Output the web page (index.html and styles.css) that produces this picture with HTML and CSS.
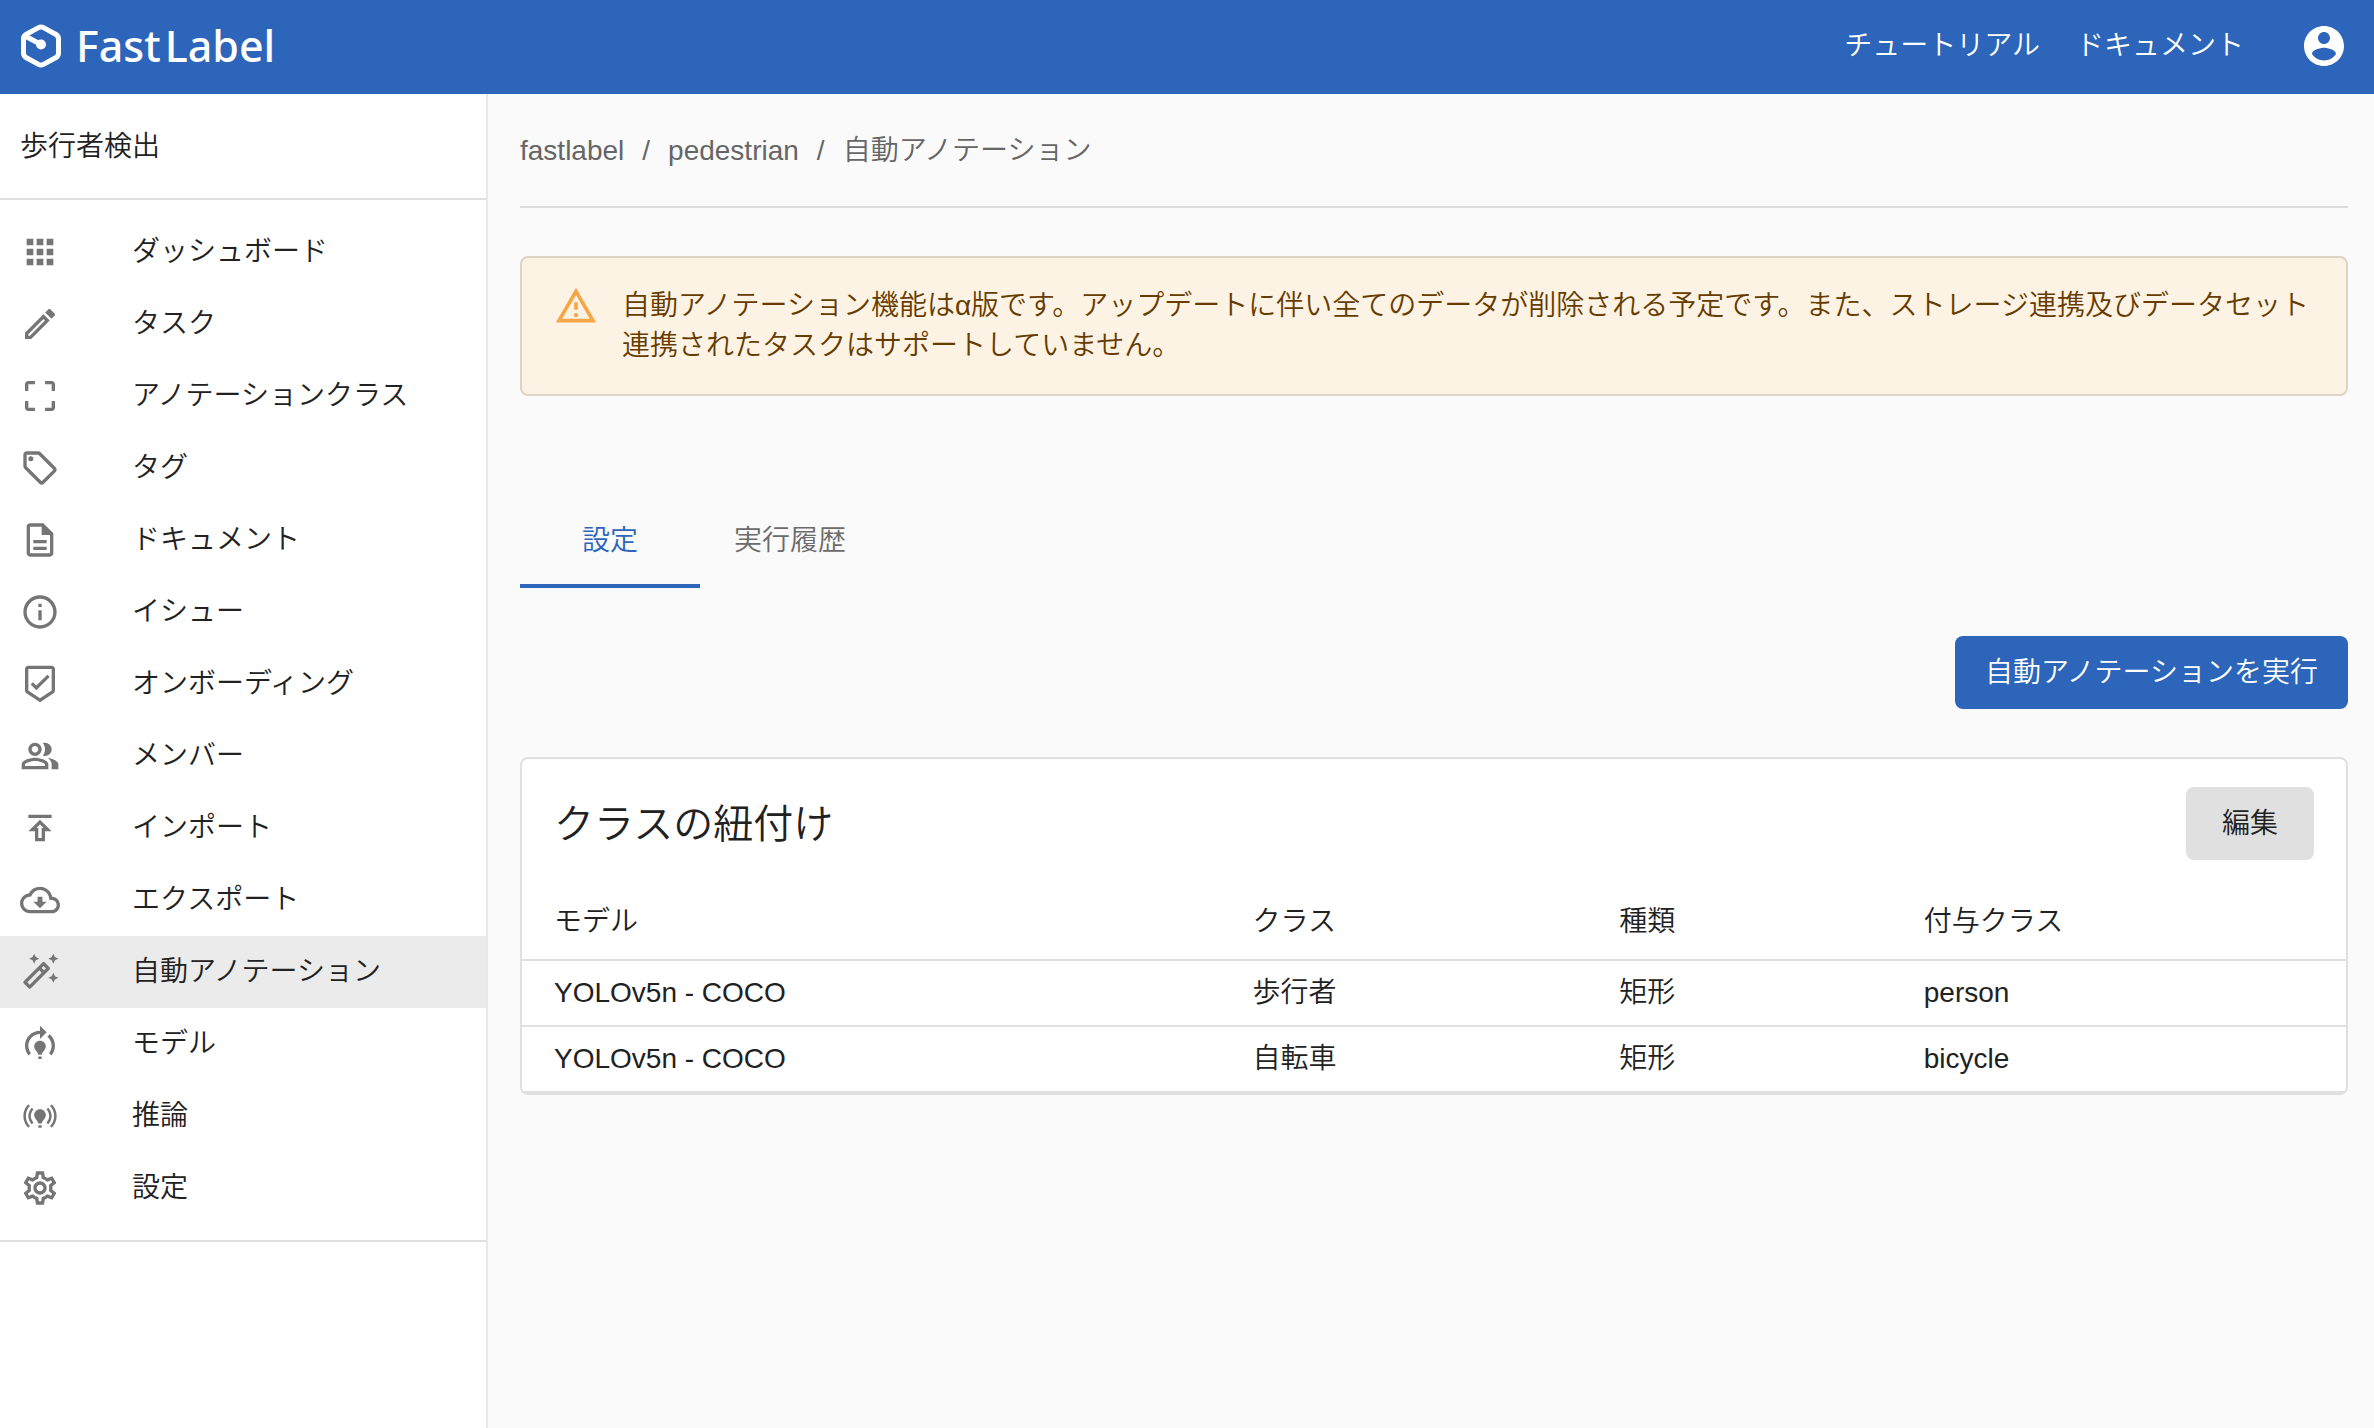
FILE: index.html
```html
<!DOCTYPE html>
<html lang="ja">

<head>
    <meta charset="UTF-8">
    <meta name="viewport" content="width=device-width, initial-scale=1.0">
    <title>自動アノテーション | FastLabel</title>
    <link rel="stylesheet" href="styles.css">
</head>

<body>
    <header class="header">
        <a class="logo" href="#">
            <svg class="logo_mark" viewBox="0 0 42 44">
                <path d="M18.5 3.6Q21 2.3 23.5 3.6L36 10.5Q38.5 12 38.5 15V29Q38.5 32 36 33.5L23.5 40.4Q21 41.7 18.5 40.4L6 33.5Q3.5 32 3.5 29V15Q3.5 12 6 10.5Z" fill="none" stroke="#fff" stroke-width="5" />
                <path d="M5 12L21 20.5" stroke="#fff" stroke-width="5" />
                <circle cx="21" cy="20.5" r="5" fill="#fff" />
            </svg>
            <span class="logo_text"><span>Fast</span><span>Label</span></span>
        </a>
        <nav class="header_nav">
            <a href="#">チュートリアル</a>
            <a href="#">ドキュメント</a>
        </nav>
        <button class="account" type="button" aria-label="アカウント">
            <svg viewBox="0 0 24 24"><path d="M12 2C6.48 2 2 6.48 2 12s4.48 10 10 10 10-4.48 10-10S17.52 2 12 2zm0 3c1.66 0 3 1.34 3 3s-1.34 3-3 3-3-1.34-3-3 1.34-3 3-3zm0 14.2c-2.5 0-4.71-1.28-6-3.22.03-1.99 4-3.08 6-3.08 1.99 0 5.97 1.09 6 3.08-1.29 1.94-3.5 3.22-6 3.22z" /></svg>
        </button>
    </header>

    <div class="wrap">
        <aside class="sidebar">
            <div class="project">歩行者検出</div>
            <nav class="menu">
                <a class="menu_item" href="#">
                    <svg viewBox="0 0 24 24"><path d="M4 8h4V4H4v4zm6 12h4v-4h-4v4zm-6 0h4v-4H4v4zm0-6h4v-4H4v4zm6 0h4v-4h-4v4zm6-10v4h4V4h-4zm-6 4h4V4h-4v4zm6 6h4v-4h-4v4zm0 6h4v-4h-4v4z" /></svg>
                    <span>ダッシュボード</span>
                </a>
                <a class="menu_item" href="#">
                    <svg viewBox="0 0 24 24"><path d="M14.06 9.02l.92.92L5.92 19H5v-.92l9.06-9.06M17.66 3c-.25 0-.51.1-.7.29l-1.83 1.83 3.75 3.75 1.83-1.83c.39-.39.39-1.02 0-1.41l-2.34-2.34c-.2-.2-.45-.29-.71-.29zm-3.6 3.19L3 17.25V21h3.75L17.81 9.94l-3.75-3.75z" /></svg>
                    <span>タスク</span>
                </a>
                <a class="menu_item" href="#">
                    <svg viewBox="0 0 24 24"><path d="M3 5v4h2V5h4V3H5c-1.1 0-2 .9-2 2zm2 10H3v4c0 1.1.9 2 2 2h4v-2H5v-4zm14 4h-4v2h4c1.1 0 2-.9 2-2v-4h-2v4zm0-16h-4v2h4v4h2V5c0-1.1-.9-2-2-2z" /></svg>
                    <span>アノテーションクラス</span>
                </a>
                <a class="menu_item" href="#">
                    <svg viewBox="0 0 24 24"><path d="M21.41 11.58l-9-9C12.05 2.22 11.55 2 11 2H4c-1.1 0-2 .9-2 2v7c0 .55.22 1.05.59 1.42l9 9c.36.36.86.58 1.41.58s1.05-.22 1.41-.59l7-7c.37-.36.59-.86.59-1.41s-.23-1.06-.59-1.42zM13 20.01L4 11V4h7v-.01l9 9-7 7.02z" /><circle cx="6.5" cy="6.5" r="1.5" /></svg>
                    <span>タグ</span>
                </a>
                <a class="menu_item" href="#">
                    <svg viewBox="0 0 24 24"><path d="M8 16h8v2H8zm0-4h8v2H8zm6-10H6c-1.1 0-2 .9-2 2v16c0 1.1.89 2 1.99 2H18c1.1 0 2-.9 2-2V8l-6-6zm4 18H6V4h7v5h5v11z" /></svg>
                    <span>ドキュメント</span>
                </a>
                <a class="menu_item" href="#">
                    <svg viewBox="0 0 24 24"><path d="M11 7h2v2h-2zm0 4h2v6h-2zm1-9C6.48 2 2 6.48 2 12s4.48 10 10 10 10-4.48 10-10S17.52 2 12 2zm0 18c-4.41 0-8-3.59-8-8s3.59-8 8-8 8 3.59 8 8-3.59 8-8 8z" /></svg>
                    <span>イシュー</span>
                </a>
                <a class="menu_item" href="#">
                    <svg viewBox="0 0 24 24"><path d="M19 1H5c-1.1 0-1.99.9-1.99 2L3 15.93c0 .69.35 1.3.88 1.66L12 23l8.11-5.41c.53-.36.88-.97.88-1.66L21 3c0-1.1-.9-2-2-2zm0 14.93l-7 4.66-7-4.67V3h14v12.93zM9.8 15.7l8-7.9-1.4-1.4-6.6 6.5-2-2-1.4 1.4z" /></svg>
                    <span>オンボーディング</span>
                </a>
                <a class="menu_item" href="#">
                    <svg viewBox="0 0 24 24"><path d="M16.67 13.13C18.04 14.06 19 15.32 19 17v3h4v-3c0-2.18-3.57-3.47-6.33-3.87zM15 12c2.21 0 4-1.79 4-4s-1.79-4-4-4c-.47 0-.91.1-1.33.24C14.5 5.27 15 6.58 15 8s-.5 2.73-1.33 3.76c.42.14.86.24 1.33.24zM9 12c2.21 0 4-1.79 4-4s-1.79-4-4-4-4 1.79-4 4 1.79 4 4 4zm0-6c1.1 0 2 .9 2 2s-.9 2-2 2-2-.9-2-2 .9-2 2-2zm0 7c-2.67 0-8 1.34-8 4v3h16v-3c0-2.66-5.33-4-8-4zm6 5H3v-.99C3.2 16.29 6.3 15 9 15s5.8 1.29 6 2v1z" /></svg>
                    <span>メンバー</span>
                </a>
                <a class="menu_item" href="#">
                    <svg viewBox="0 0 24 24"><path d="M5 4h14v2H5zm0 10h4v6h6v-6h4l-7-7-7 7zm8-2v6h-2v-6H9.83L12 9.83 14.17 12H13z" /></svg>
                    <span>インポート</span>
                </a>
                <a class="menu_item" href="#">
                    <svg viewBox="0 0 24 24"><path d="M19.35 10.04C18.67 6.59 15.64 4 12 4 9.11 4 6.6 5.64 5.35 8.04 2.34 8.36 0 10.91 0 14c0 3.31 2.69 6 6 6h13c2.76 0 5-2.24 5-5 0-2.64-2.05-4.78-4.65-4.96zM19 18H6c-2.21 0-4-1.79-4-4 0-2.05 1.53-3.76 3.56-3.97l1.07-.11.5-.95C8.08 7.14 9.94 6 12 6c2.62 0 4.88 1.86 5.39 4.43l.3 1.5 1.53.11c1.56.1 2.78 1.41 2.78 2.96 0 1.65-1.35 3-3 3zm-5.55-8h-2.9v3H8l4 4 4-4h-2.55z" /></svg>
                    <span>エクスポート</span>
                </a>
                <a class="menu_item active" href="#" aria-current="page">
                    <svg viewBox="0 0 24 24"><path d="M20 7l.94-2.06L23 4l-2.06-.94L20 1l-.94 2.06L17 4l2.06.94zM8.5 7l.94-2.06L11.5 4l-2.06-.94L8.5 1l-.94 2.06L5.5 4l2.06.94zM20 12.5l-.94 2.06-2.06.94 2.06.94.94 2.06.94-2.06L23 15.5l-2.06-.94zm-2.29-3.38l-2.83-2.83c-.2-.19-.45-.29-.71-.29-.26 0-.51.1-.71.29L2.29 17.46c-.39.39-.39 1.02 0 1.41l2.83 2.83c.2.2.45.3.71.3s.51-.1.71-.29l11.17-11.17c.39-.39.39-1.03 0-1.42zm-3.54-.7l1.41 1.41L14.41 11 13 9.59l1.17-1.17zM5.83 19.59l-1.41-1.41L11.59 11 13 12.41l-7.17 7.18z" /></svg>
                    <span>自動アノテーション</span>
                </a>
                <a class="menu_item" href="#">
                    <svg viewBox="0 0 24 24"><path d="M15.5 13.5c0 2-2.5 3.5-2.5 5h-2c0-1.5-2.5-3-2.5-5 0-1.93 1.57-3.5 3.5-3.5s3.5 1.57 3.5 3.5zm-2.5 6h-2V21h2v-1.5zm6-6.5c0 1.68-.59 3.21-1.58 4.42l1.42 1.42C20.18 17.27 21 15.23 21 13c0-2.74-1.23-5.19-3.16-6.84l-1.42 1.42C17.99 8.86 19 10.82 19 13zm-3-8l-4-4v3c-4.97 0-9 4.03-9 9 0 2.23.82 4.27 2.16 5.84l1.42-1.42C5.59 16.21 5 14.68 5 13c0-3.86 3.14-7 7-7v3l4-4z" /></svg>
                    <span>モデル</span>
                </a>
                <a class="menu_item" href="#">
                    <svg viewBox="0 0 24 24"><path d="M15.5 11.5c0 2-2.5 3.5-2.5 5h-2c0-1.5-2.5-3-2.5-5C8.5 9.57 10.07 8 12 8s3.5 1.57 3.5 3.5zm-2.5 6h-2V19h2v-1.5zm9-5.5c0-2.76-1.12-5.26-2.93-7.07l-1.06 1.06C19.55 7.53 20.5 9.66 20.5 12c0 2.34-.95 4.47-2.49 6.01l1.06 1.06C20.88 17.26 22 14.76 22 12zM3.5 12c0-2.34.95-4.47 2.49-6.01L4.93 4.93C3.12 6.74 2 9.24 2 12s1.12 5.26 2.93 7.07l1.06-1.06C4.45 16.47 3.5 14.34 3.5 12zm14 0c0 1.52-.62 2.89-1.61 3.89l1.06 1.06C18.22 15.68 19 13.93 19 12c0-1.93-.78-3.68-2.05-4.95l-1.06 1.06c.99 1 1.61 2.37 1.61 3.89zM7.05 16.95l1.06-1.06c-1-1-1.61-2.37-1.61-3.89s.62-2.89 1.61-3.89L7.05 7.05C5.78 8.32 5 10.07 5 12s.78 3.68 2.05 4.95z" /></svg>
                    <span>推論</span>
                </a>
                <a class="menu_item" href="#">
                    <svg viewBox="0 0 24 24"><path d="M19.43 12.98c.04-.32.07-.64.07-.98 0-.34-.03-.66-.07-.98l2.11-1.65c.19-.15.24-.42.12-.64l-2-3.46c-.09-.16-.26-.25-.44-.25-.06 0-.12.01-.17.03l-2.49 1c-.52-.4-1.08-.73-1.69-.98l-.38-2.65C14.46 2.18 14.25 2 14 2h-4c-.25 0-.46.18-.49.42l-.38 2.65c-.61.25-1.17.59-1.69.98l-2.49-1c-.06-.02-.12-.03-.18-.03-.17 0-.34.09-.43.25l-2 3.46c-.13.22-.07.49.12.64l2.11 1.65c-.04.32-.07.65-.07.98 0 .33.03.66.07.98l-2.11 1.65c-.19.15-.24.42-.12.64l2 3.46c.09.16.26.25.44.25.06 0 .12-.01.17-.03l2.49-1c.52.4 1.08.73 1.69.98l.38 2.65c.03.24.24.42.49.42h4c.25 0 .46-.18.49-.42l.38-2.65c.61-.25 1.17-.59 1.69-.98l2.49 1c.06.02.12.03.18.03.17 0 .34-.09.43-.25l2-3.46c.12-.22.07-.49-.12-.64l-2.11-1.65zm-1.98-1.71c.04.31.05.52.05.73 0 .21-.02.43-.05.73l-.14 1.13.89.7 1.08.84-.7 1.21-1.27-.51-1.04-.42-.9.68c-.43.32-.84.56-1.25.73l-1.06.43-.16 1.13-.2 1.35h-1.4l-.19-1.35-.16-1.13-1.06-.43c-.43-.18-.83-.41-1.23-.71l-.91-.7-1.06.43-1.27.51-.7-1.21 1.08-.84.89-.7-.14-1.13c-.03-.31-.05-.54-.05-.74s.02-.43.05-.73l.14-1.13-.89-.7-1.08-.84.7-1.21 1.27.51 1.04.42.9-.68c.43-.32.84-.56 1.25-.73l1.06-.43.16-1.13.2-1.35h1.39l.19 1.35.16 1.13 1.06.43c.43.18.83.41 1.23.71l.91.7 1.06-.43 1.27-.51.7 1.21-1.07.85-.89.7.14 1.13zM12 8c-2.21 0-4 1.79-4 4s1.79 4 4 4 4-1.79 4-4-1.79-4-4-4zm0 6c-1.1 0-2-.9-2-2s.9-2 2-2 2 .9 2 2-.9 2-2 2z" /></svg>
                    <span>設定</span>
                </a>
            </nav>
        </aside>

        <main class="main">
            <nav class="breadcrumb">
                <a href="#">fastlabel</a>
                <span>/</span>
                <a href="#">pedestrian</a>
                <span>/</span>
                <span>自動アノテーション</span>
            </nav>

            <div class="alert" role="alert">
                <svg viewBox="0 0 24 24"><path d="M12 5.99L19.53 19H4.47L12 5.99M12 2L1 21h22L12 2zm1 14h-2v2h2v-2zm0-6h-2v4h2v-4z" /></svg>
                <p>自動アノテーション機能はα版です。アップデートに伴い全てのデータが削除される予定です。また、ストレージ連携及びデータセット連携されたタスクはサポートしていません。</p>
            </div>

            <div class="tabs" role="tablist">
                <button class="tab active" type="button" role="tab" aria-selected="true">設定</button>
                <button class="tab" type="button" role="tab" aria-selected="false">実行履歴</button>
            </div>

            <div class="actions">
                <button class="btn btn_primary" type="button">自動アノテーションを実行</button>
            </div>

            <section class="card">
                <div class="card_head">
                    <h2>クラスの紐付け</h2>
                    <button class="btn" type="button">編集</button>
                </div>
                <table class="table">
                    <thead>
                        <tr>
                            <th class="col_model">モデル</th>
                            <th class="col_class">クラス</th>
                            <th class="col_type">種類</th>
                            <th>付与クラス</th>
                        </tr>
                    </thead>
                    <tbody>
                        <tr>
                            <td>YOLOv5n - COCO</td>
                            <td>歩行者</td>
                            <td>矩形</td>
                            <td>person</td>
                        </tr>
                        <tr>
                            <td>YOLOv5n - COCO</td>
                            <td>自転車</td>
                            <td>矩形</td>
                            <td>bicycle</td>
                        </tr>
                    </tbody>
                </table>
            </section>
        </main>
    </div>
</body>

</html>
```
FILE: styles.css
```css
* {
    box-sizing: border-box;
}

body {
    margin: 0;
    min-height: 100vh;
    display: flex;
    flex-direction: column;
    font-family: "Liberation Sans", "Noto Sans CJK JP", sans-serif;
    font-size: 28px;
    font-weight: 350;
    line-height: 40px;
    color: #212121;
    background-color: #fafafa;
}

a {
    color: inherit;
    text-decoration: none;
}

button {
    font: inherit;
    color: inherit;
    border: 0;
    background: none;
    cursor: pointer;
}

svg {
    display: block;
    flex-shrink: 0;
    fill: currentColor;
}

/* header */
.header {
    height: 94px;
    padding: 0 26px 2px 20px;
    display: flex;
    align-items: center;
    color: #fff;
    background-color: #2c65ba;
}

.logo {
    display: flex;
    align-items: center;
    gap: 14px;
}

.logo_mark {
    width: 42px;
    height: 44px;
}

.logo_text {
    display: flex;
    gap: 4px;
    font-family: "Noto Sans", sans-serif;
    font-size: 43px;
    font-weight: 500;
}

.header_nav {
    margin-left: auto;
    display: flex;
    gap: 36px;
}

.account {
    margin-left: 56px;
    padding: 0;
}

.account svg {
    width: 48px;
    height: 48px;
}

.wrap {
    flex: 1;
    display: flex;
}

/* sidebar */
.sidebar {
    width: 488px;
    flex-shrink: 0;
    border-right: 2px solid #e8e8e8;
    background-color: #fff;
}

.project {
    padding: 33px 20px 31px;
    border-bottom: 2px solid #e0e0e0;
}

.menu {
    padding: 16px 0;
    border-bottom: 2px solid #e0e0e0;
}

.menu_item {
    height: 72px;
    padding: 0 20px;
    display: flex;
    align-items: center;
    gap: 72px;
}

.menu_item svg {
    width: 40px;
    height: 40px;
    color: #757575;
}

.menu_item.active {
    background-color: #ebebeb;
}

/* main */
.main {
    flex: 1;
    min-width: 0;
    padding: 0 26px 32px 32px;
}

.breadcrumb {
    padding: 37px 0 35px;
    display: flex;
    gap: 18px;
    color: #666;
    border-bottom: 2px solid #dcdcdc;
}

.alert {
    margin-top: 48px;
    padding: 26px 32px;
    display: flex;
    gap: 24px;
    color: #663c00;
    border: 2px solid #dfd3c3;
    border-radius: 8px;
    background-color: #fdf3e4;
}

.alert svg {
    width: 44px;
    height: 44px;
    color: #f7a647;
}

.alert p {
    margin: 0;
    padding: 2px 0;
}

.tabs {
    margin-top: 96px;
    display: flex;
}

.tab {
    min-width: 180px;
    height: 96px;
    padding: 6px 32px 0;
    color: #6b6b6b;
    border-bottom: 4px solid transparent;
}

.tab.active {
    color: #2c65ba;
    border-color: #2c65ba;
}

.actions {
    margin: 48px 0;
    display: flex;
    justify-content: flex-end;
}

.btn {
    padding: 17px 36px 16px;
    border-radius: 8px;
    background-color: #e0e0e0;
}

.btn_primary {
    padding-left: 30px;
    padding-right: 30px;
    color: #fff;
    background-color: #2c65ba;
}

.card {
    border: 2px solid #e0e0e0;
    border-radius: 8px;
    background-color: #fff;
}

.card_head {
    padding: 28px 32px 24px;
    display: flex;
    justify-content: space-between;
    align-items: center;
}

.card_head h2 {
    margin: 0;
    font-size: 40px;
    font-weight: 350;
}

.table {
    width: 100%;
    border-collapse: collapse;
    table-layout: fixed;
}

.table th,
.table td {
    padding: 12px 32px;
    text-align: left;
    font-weight: 350;
    border-bottom: 2px solid #e0e0e0;
}

.table th {
    padding: 18px 32px 17px;
}

.col_model {
    width: 38.3%;
}

.col_class {
    width: 20.1%;
}

.col_type {
    width: 16.7%;
}
```
